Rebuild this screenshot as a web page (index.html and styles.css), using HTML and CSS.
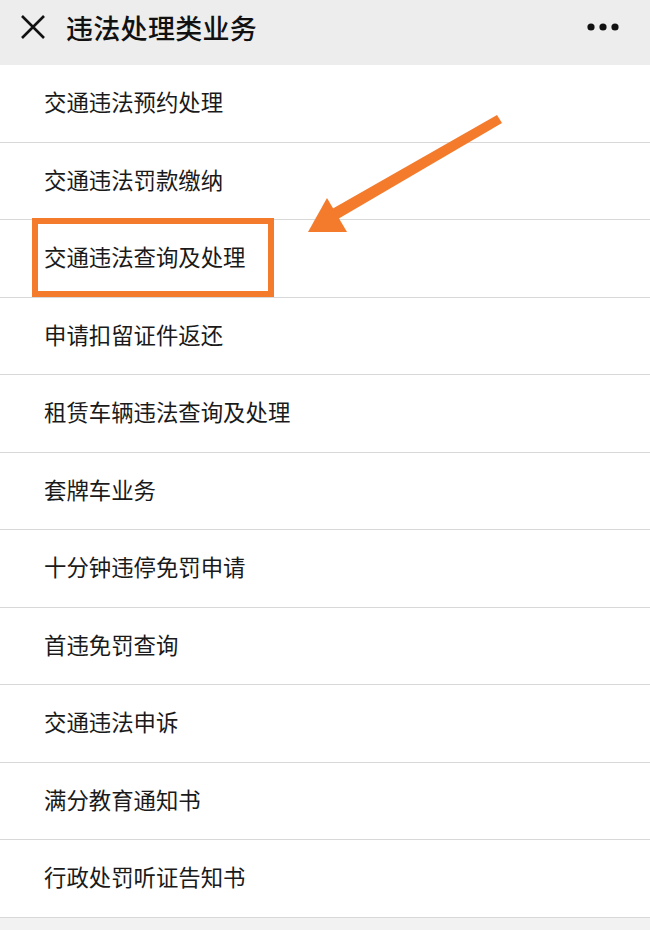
FILE: index.html
```html
<!DOCTYPE html>
<html>

<head>
	<meta charset="utf-8">
	<meta name="viewport" content="width=device-width, initial-scale=1">
	<title>违法处理类业务</title>
	<link rel="stylesheet" href="styles.css">
</head>

<body>
	<div class="page">
		<div class="topbar">
			<svg class="close" width="26" height="26" viewBox="0 0 26 26">
				<path d="M2 2 L24 24 M24 2 L2 24" stroke="#111" stroke-width="2.6" fill="none" />
			</svg>
			<div class="title">违法处理类业务</div>
			<svg class="more" width="34" height="10" viewBox="0 0 34 10">
				<circle cx="5" cy="5" r="3.6" fill="#111" />
				<circle cx="17" cy="5" r="3.6" fill="#111" />
				<circle cx="29" cy="5" r="3.6" fill="#111" />
			</svg>
		</div>

		<ul class="list">
			<li class="item">交通违法预约处理</li>
			<li class="item">交通违法罚款缴纳</li>
			<li class="item">交通违法查询及处理</li>
			<li class="item">申请扣留证件返还</li>
			<li class="item">租赁车辆违法查询及处理</li>
			<li class="item">套牌车业务</li>
			<li class="item">十分钟违停免罚申请</li>
			<li class="item">首违免罚查询</li>
			<li class="item">交通违法申诉</li>
			<li class="item">满分教育通知书</li>
			<li class="item">行政处罚听证告知书</li>
		</ul>

		<!-- annotation drawn over the list -->
		<div class="mark"></div>
		<svg class="arrow" width="220" height="140" viewBox="0 0 220 140">
			<path d="M207 15 L212 23 L48 119 L42 109 Z" fill="#f47b2c" />
			<path d="M18 132 L37 98 L57 132 Z" fill="#f47b2c" />
		</svg>
	</div>
</body>

</html>
```

FILE: styles.css
```css
body {
	margin: 0;
	background-color: #f2f2f2;
	font-family: "Noto Sans CJK SC", "Noto Sans", sans-serif;
	color: #111;
}

.page {
	position: relative;
	width: 650px;
}

.topbar {
	height: 65px;
	background-color: #ededed;
	display: flex;
	align-items: center;
	padding: 0 30px 0 20px;
	box-sizing: border-box;
}

.close {
	margin-top: -12px;
}

.title {
	margin-left: 20px;
	margin-top: -10px;
	font-size: 27px;
	font-weight: 500;
	letter-spacing: 0.3px;
	flex: 1;
}

.more {
	margin-top: -12px;
}

.list {
	list-style: none;
	margin: 0;
	padding: 0;
	background-color: #fff;
}

.item {
	height: 76.5px;
	border-bottom: 1px solid #d8d8d8;
	display: flex;
	align-items: center;
	padding-left: 44px;
	padding-bottom: 4px;
	box-sizing: border-box;
	height: 77.5px;
	font-size: 22.4px;
	color: #1a1a1a;
}

.mark {
	position: absolute;
	left: 32px;
	top: 218px;
	width: 242px;
	height: 79px;
	border: 6px solid #f47b2c;
	box-sizing: border-box;
}

.arrow {
	position: absolute;
	left: 290px;
	top: 100px;
}
```
